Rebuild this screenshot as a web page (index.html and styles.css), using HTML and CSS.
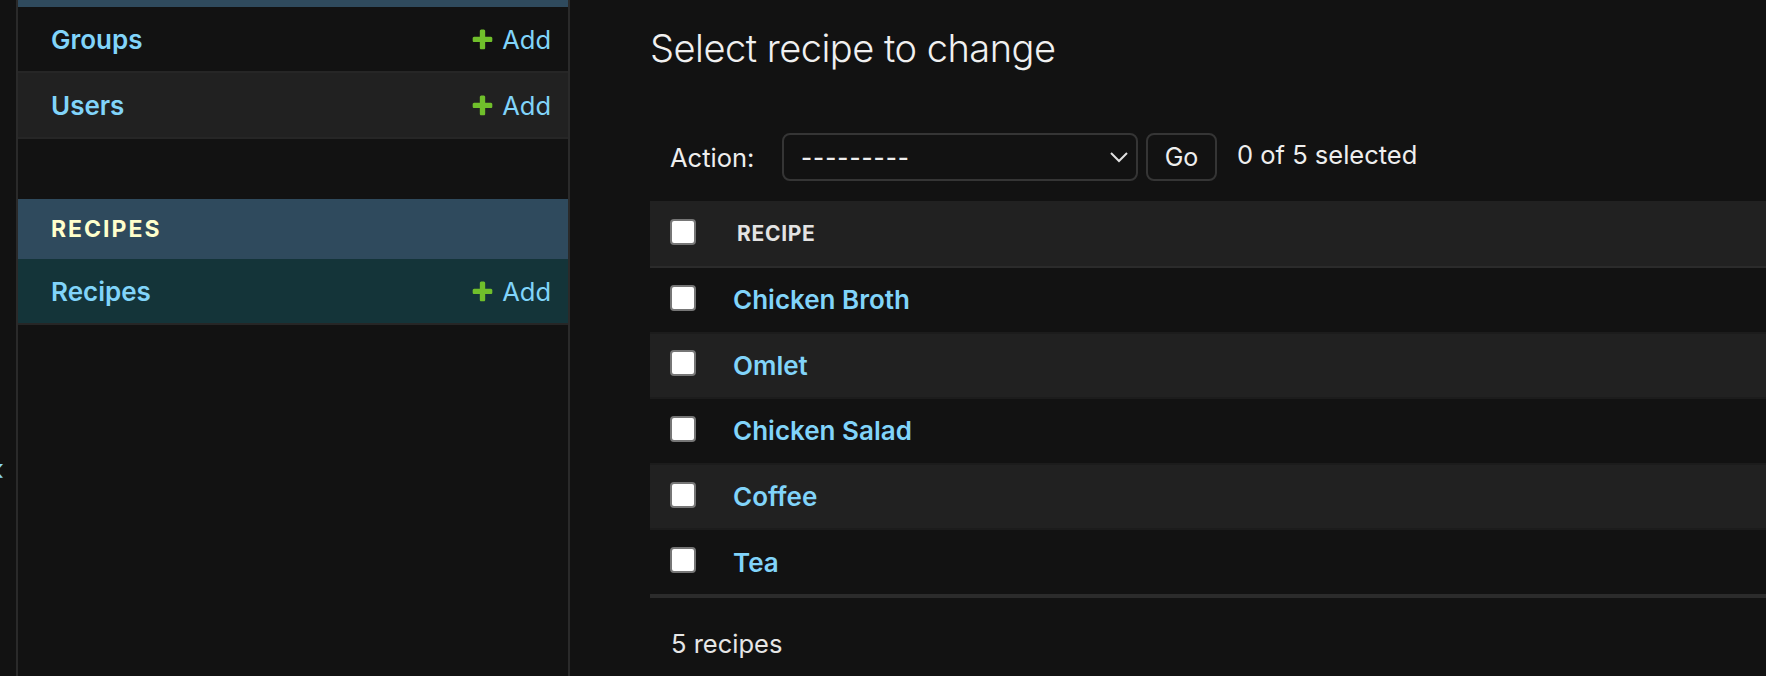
FILE: index.html
```html
<!DOCTYPE html>
<html lang="en">
<head>
<meta charset="utf-8">
<title>Select recipe to change</title>
<link rel="stylesheet" href="styles.css">
</head>
<body>
<div class="page">
  <div class="toggle"><span class="toggle-glyph">«</span></div>
  <nav class="sidebar">
    <div class="caption-cut"></div>
    <div class="module">
      <div class="mrow">
        <a class="mname" href="#">Groups</a>
        <a class="addlink" href="#"><svg class="plus" viewBox="0 0 1792 1792"><path d="M1600 796v192q0 40-28 68t-68 28h-416v416q0 40-28 68t-68 28h-192q-40 0-68-28t-28-68v-416h-416q-40 0-68-28t-28-68v-192q0-40 28-68t68-28h416v-416q0-40 28-68t68-28h192q40 0 68 28t28 68v416h416q40 0 68 28t28 68z"/></svg>Add</a>
      </div>
      <div class="mrow alt">
        <a class="mname" href="#">Users</a>
        <a class="addlink" href="#"><svg class="plus" viewBox="0 0 1792 1792"><path d="M1600 796v192q0 40-28 68t-68 28h-416v416q0 40-28 68t-68 28h-192q-40 0-68-28t-28-68v-416h-416q-40 0-68-28t-28-68v-192q0-40 28-68t68-28h416v-416q0-40 28-68t68-28h192q40 0 68 28t28 68v416h416q40 0 68 28t28 68z"/></svg>Add</a>
      </div>
    </div>
    <div class="module">
      <div class="caption">Recipes</div>
      <div class="mrow current">
        <a class="mname" href="#">Recipes</a>
        <a class="addlink" href="#"><svg class="plus" viewBox="0 0 1792 1792"><path d="M1600 796v192q0 40-28 68t-68 28h-416v416q0 40-28 68t-68 28h-192q-40 0-68-28t-28-68v-416h-416q-40 0-68-28t-28-68v-192q0-40 28-68t68-28h416v-416q0-40 28-68t68-28h192q40 0 68 28t28 68v416h416q40 0 68 28t28 68z"/></svg>Add</a>
      </div>
    </div>
  </nav>
  <main class="content">
    <h1 class="title">Select recipe to change</h1>
    <div class="actions">
      <label class="action-label">Action:</label>
      <div class="select">
        <span class="select-value">---------</span>
        <svg class="chev" viewBox="0 0 18 12"><polyline points="1,2 9,10 17,2"/></svg>
      </div>
      <button class="go" type="button">Go</button>
      <span class="counter">0 of 5 selected</span>
    </div>
    <div class="results">
      <div class="rrow head">
        <span class="cell-check"><span class="cbox"></span></span>
        <span class="col-title">Recipe</span>
      </div>
      <div class="rrow"><span class="cell-check"><span class="cbox"></span></span><a class="rlink" href="#">Chicken Broth</a></div>
      <div class="rrow alt"><span class="cell-check"><span class="cbox"></span></span><a class="rlink" href="#">Omlet</a></div>
      <div class="rrow"><span class="cell-check"><span class="cbox"></span></span><a class="rlink" href="#">Chicken Salad</a></div>
      <div class="rrow alt"><span class="cell-check"><span class="cbox"></span></span><a class="rlink" href="#">Coffee</a></div>
      <div class="rrow last"><span class="cell-check"><span class="cbox"></span></span><a class="rlink" href="#">Tea</a></div>
    </div>
    <p class="paginator">5 recipes</p>
  </main>
</div>
</body>
</html>
```

FILE: styles.css
```css
* { box-sizing: border-box; }
html, body {
  margin: 0;
  padding: 0;
  background: #121212;
  height: 676px;
  overflow: hidden;
}
body {
  font-family: Inter, "Noto Sans", sans-serif;
  color: #eeeeee;
}
a { text-decoration: none; }

.page {
  display: flex;
  height: 676px;
  overflow: hidden;
}

/* collapse toggle strip */
.toggle {
  flex: 0 0 18px;
  border-right: 2px solid #2a2a2a;
  display: flex;
  justify-content: flex-end;
  align-items: flex-start;
  overflow: hidden;
  padding-top: 451px;
}
.toggle-glyph {
  color: #81d4fa;
  font-size: 30px;
  line-height: 36px;
  font-weight: 700;
  margin-right: 12px;
}

/* sidebar */
.sidebar {
  flex: 0 0 552px;
  border-right: 2px solid #2a2a2a;
  display: flex;
  flex-direction: column;
}
.caption-cut {
  height: 7px;
  background: #2f4a5d;
}
.module { margin-bottom: 60px; }
.caption {
  height: 60px;
  background: #2f4a5d;
  color: #ffffcc;
  font-weight: 700;
  font-size: 23px;
  letter-spacing: 2px;
  text-transform: uppercase;
  display: flex;
  align-items: center;
  padding-left: 33px;
}
.mrow {
  height: 66px;
  border-bottom: 2px solid #262626;
  display: flex;
  align-items: center;
  justify-content: space-between;
  padding: 0 17px 0 33px;
}
.mrow.alt { background: #212121; }
.mrow.current { background: #143439; }
.mname {
  color: #81d4fa;
  font-weight: 600;
  font-size: 26px;
  letter-spacing: 0;
}
.addlink {
  color: #81d4fa;
  font-size: 25.5px;
  display: flex;
  align-items: center;
}
.plus {
  width: 25px;
  height: 25px;
  fill: #70bf2b;
  margin-right: 7px;
}

/* content */
.content {
  flex: 1 1 auto;
  padding-left: 80px;
  min-width: 0;
}
.title {
  margin: 0;
  padding-top: 24px;
  font-weight: 300;
  font-size: 38px;
  line-height: 48px;
  letter-spacing: -0.5px;
  color: #f0f0f0;
}
.actions {
  margin-top: 61px;
  height: 48px;
  display: flex;
  align-items: center;
  font-size: 25.5px;
  color: #eeeeee;
}
.action-label {
  margin-left: 20px;
  width: 112px;
}
.select {
  width: 356px;
  height: 48px;
  border: 2px solid #353535;
  border-radius: 8px;
  display: flex;
  align-items: center;
  justify-content: space-between;
  padding: 0 8px 0 17px;
}
.select-value {
  font-size: 24px;
  letter-spacing: 1px;
  font-weight: 500;
}
.chev {
  width: 18px;
  height: 12px;
  fill: none;
  stroke: #e0e0e0;
  stroke-width: 2;
}
.go {
  margin-left: 8px;
  width: 71px;
  height: 48px;
  background: #121212;
  border: 2px solid #353535;
  border-radius: 8px;
  color: #eeeeee;
  font-family: inherit;
  font-size: 25px;
  padding: 0;
}
.counter {
  margin-left: 20px;
  margin-top: -6px;
}

.results {
  margin-top: 20px;
}
.rrow {
  height: 65.6px;
  border-bottom: 2px solid #1c1c1c;
  display: flex;
  align-items: center;
}
.rrow.alt { background: #212121; }
.rrow.head {
  height: 67px;
  background: #212121;
  border-bottom: 2px solid #2b2b2b;
}
.rrow.last { border-bottom: 4px solid #2b2b2b; height: 67.6px; }
.cell-check {
  width: 83px;
  padding-left: 20px;
  display: flex;
  margin-top: -4px;
}
.cbox {
  width: 26px;
  height: 26px;
  background: #ffffff;
  border: 2px solid #767676;
  border-radius: 4px;
}
.col-title {
  font-size: 21px;
  font-weight: 700;
  letter-spacing: 0.7px;
  text-transform: uppercase;
  color: #e3e3e3;
  margin-left: 4px;
}
.rlink {
  color: #81d4fa;
  font-weight: 600;
  font-size: 26px;
  letter-spacing: 0;
}
.paginator {
  margin: 0;
  padding: 31px 0 0 21px;
  font-size: 25.5px;
  line-height: 30px;
  color: #e6e6e6;
}
```
